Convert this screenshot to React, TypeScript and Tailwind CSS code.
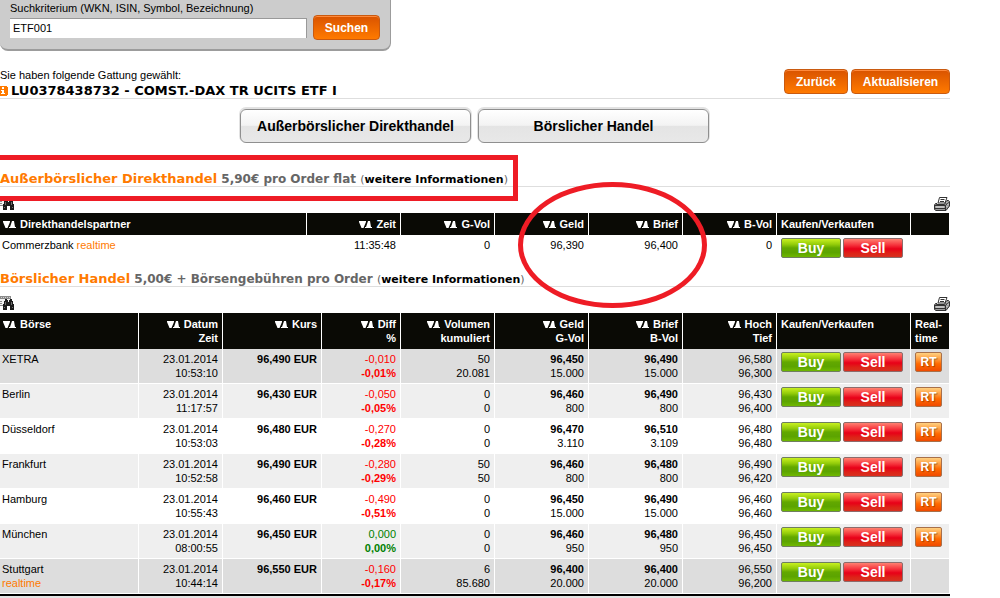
import type { ReactNode } from "react";

type Quote = {
  name: string;
  realtime?: boolean;
  date: string;
  time: string;
  price: string;
  diff: string;
  percent: string;
  trend: "up" | "down";
  volume: string;
  total: string;
  bid: string;
  bidVolume: string;
  ask: string;
  askVolume: string;
  high: string;
  low: string;
  rt: boolean;
  shade: string;
};

const quotes: Quote[] = [
  { name: "XETRA", date: "23.01.2014", time: "10:53:10", price: "96,490 EUR", diff: "-0,010", percent: "-0,01%", trend: "down", volume: "50", total: "20.081", bid: "96,450", bidVolume: "15.000", ask: "96,490", askVolume: "15.000", high: "96,580", low: "96,300", rt: true, shade: "bg-[#dddddd]" },
  { name: "Berlin", date: "23.01.2014", time: "11:17:57", price: "96,430 EUR", diff: "-0,050", percent: "-0,05%", trend: "down", volume: "0", total: "0", bid: "96,460", bidVolume: "800", ask: "96,490", askVolume: "800", high: "96,430", low: "96,400", rt: true, shade: "bg-[#efefef]" },
  { name: "Düsseldorf", date: "23.01.2014", time: "10:53:03", price: "96,480 EUR", diff: "-0,270", percent: "-0,28%", trend: "down", volume: "0", total: "0", bid: "96,470", bidVolume: "3.110", ask: "96,510", askVolume: "3.109", high: "96,480", low: "96,480", rt: true, shade: "bg-white" },
  { name: "Frankfurt", date: "23.01.2014", time: "10:52:58", price: "96,490 EUR", diff: "-0,280", percent: "-0,29%", trend: "down", volume: "50", total: "50", bid: "96,460", bidVolume: "800", ask: "96,480", askVolume: "800", high: "96,490", low: "96,420", rt: true, shade: "bg-[#efefef]" },
  { name: "Hamburg", date: "23.01.2014", time: "10:55:43", price: "96,460 EUR", diff: "-0,490", percent: "-0,51%", trend: "down", volume: "0", total: "0", bid: "96,450", bidVolume: "15.000", ask: "96,490", askVolume: "15.000", high: "96,460", low: "96,460", rt: true, shade: "bg-white" },
  { name: "München", date: "23.01.2014", time: "08:00:55", price: "96,450 EUR", diff: "0,000", percent: "0,00%", trend: "up", volume: "0", total: "0", bid: "96,460", bidVolume: "950", ask: "96,480", askVolume: "950", high: "96,450", low: "96,450", rt: true, shade: "bg-[#efefef]" },
  { name: "Stuttgart", realtime: true, date: "23.01.2014", time: "10:44:14", price: "96,550 EUR", diff: "-0,160", percent: "-0,17%", trend: "down", volume: "6", total: "85.680", bid: "96,400", bidVolume: "20.000", ask: "96,400", askVolume: "20.000", high: "96,550", low: "96,200", rt: false, shade: "bg-[#dddddd]" },
];

function OrangeButton({ children, size }: { children: string; size: string }) {
  return (
    <button
      type="button"
      className={`h-[25px] rounded border border-[#c95a10] bg-linear-to-b from-[#d95300] to-[#ff7a00] text-center font-bold text-white shadow-[inset_0_1px_0_#ff8a3c] ${size}`}
    >
      {children}
    </button>
  );
}

function NavButton({ children }: { children: string }) {
  return (
    <button
      type="button"
      className="h-[34px] w-[231px] rounded-md border border-[#8f8f8f] bg-[linear-gradient(#ffffff,#f3f3f3_48%,#e4e4e4_50%,#e8e8e8)] text-[14px] font-bold text-black shadow-[0_-1px_0_1px_#e2e2e2]"
    >
      {children}
    </button>
  );
}

function TradeButtons() {
  return (
    <div className="flex gap-0.5 text-[14px] leading-4 font-bold text-white [text-shadow:1px_1px_1px_#00000066]">
      <button
        type="button"
        className="h-5 w-[60px] rounded-xs border border-[#6f7f5f] bg-[linear-gradient(#c8f020,#93cc0a_30%,#62a800_50%,#5ca400_75%,#6fb800)]"
      >
        Buy
      </button>
      <button
        type="button"
        className="h-5 w-[60px] rounded-xs border border-[#8d6b6b] bg-[linear-gradient(#ff8070,#f5303a_35%,#e80018_55%,#dd2418_80%,#d83020)]"
      >
        Sell
      </button>
    </div>
  );
}

function RtButton() {
  return (
    <button
      type="button"
      className="block h-5 w-[27px] rounded-xs border border-[#a8704a] bg-[linear-gradient(#ffd080,#ff9a3c_35%,#ff6a00_60%,#f04a00)] text-[12px] leading-4 font-bold text-white [text-shadow:1px_1px_1px_#00000055]"
    >
      RT
    </button>
  );
}

function SortArrows() {
  return (
    <svg aria-hidden="true" viewBox="0 0 13 7" className="mr-1 inline-block h-[7px] w-[13px] align-baseline" fill="#fff">
      <path d="M0 0h7v1L4.500 7h-2L0 1z" />
      <path d="M6 7v-1h1l2-6h2l1 6h1v1z" />
    </svg>
  );
}

function FindIcon() {
  return (
    <svg viewBox="0 0 15 16" className="h-4 w-[15px]" shapeRendering="crispEdges">
      <path d="M0 1h11v10H0z" fill="#f2f2f2" />
      <path d="M0 1h11v3H0z" fill="#8a8a8a" />
      <path d="M1 2h1v1H1zM3 2h1v1H3zM5 2h1v1H5zM7 2h1v1H7zM9 2h1v1H9z" fill="#d0d0d0" />
      <path d="M10 3h1v4h-1zM0 6h2v1H0zM0 8h2v1H0zM0 10h3v1H0z" fill="#8a8a8a" />
      <path d="M5 4h2v1h1v2h1V5h1V4h2v2h1v3h1v6h-4v-4H7v4H3V9h1V6h1z" fill="#1c1c1c" />
      <path d="M5 7h1v3H5zM11 7h1v3h-1zM4 12h1v1H4zM12 12h1v1h-1z" fill="#6c6c6c" />
    </svg>
  );
}

function PrintIcon() {
  return (
    <svg viewBox="0 0 16 14" className="h-[14px] w-4">
      <path d="M1.500 6.500H3l-.5 1h8l1.500-3 1-1h1.500l1 1v4.500l-3.500 4.500h-10l-1.500-1V8z" fill="#9b9b9b" stroke="#333" />
      <path d="M5.500 .5h7.500l-2 5.500H4z" fill="#fff" stroke="#333" />
      <path d="M6.500 2.500h4M6 4.500h4" stroke="#333" />
      <path d="M1 8.500h10.500l3-3.500M1 11.500h10.500M11.500 8.500v5" stroke="#333" fill="none" />
      <path d="M2 10h8" stroke="#e6e6e6" />
      <path d="M12.500 5.500h1M13.500 7.500h1M12.500 9.500h1" stroke="#ddd" />
    </svg>
  );
}

function SectionHeading({ title, price }: { title: string; price: string }) {
  return (
    <h2 className="h-[15px] border-b border-[#dedede] font-['DejaVu_Sans',sans-serif] text-[12px] leading-[14px] font-bold text-[#666666]">
      <span className="text-[13px] text-[#ff7a00]">{title}</span> {price}{" "}
      <span className="text-[11px] font-normal">
        (
        <a href="#informationen" className="font-bold text-black">
          weitere Informationen
        </a>
        )
      </span>
    </h2>
  );
}

function Toolbar() {
  return (
    <div className="flex h-[26px] items-end justify-between pb-0.5">
      <button type="button" aria-label="Suchen">
        <FindIcon />
      </button>
      <button type="button" aria-label="Drucken">
        <PrintIcon />
      </button>
    </div>
  );
}

function Head({ children, left, plain }: { children?: ReactNode; left?: boolean; plain?: boolean }) {
  return (
    <th
      className={`border-r border-white py-1 pr-1 align-top ${plain ? "pl-1" : "pl-[3px]"} ${left ? "text-left" : "text-right"}`}
    >
      {!plain && <SortArrows />}
      {children}
    </th>
  );
}

function Cell({ children, className = "text-right" }: { children?: ReactNode; className?: string }) {
  return <td className={`border-r border-white py-[3px] pr-1 align-top ${className}`}>{children}</td>;
}

export default function App() {
  return (
    <div className="relative overflow-hidden bg-white font-['Liberation_Sans',Arial,sans-serif] text-[11px] leading-[14px] text-black">
      <div className="w-[95%]">
        <form className="w-fit rounded-b-lg border-r border-b-2 border-[#9c9c9c] bg-[#cccccc] pt-px pr-2.5 pb-[9px] pl-2.5">
          <label htmlFor="suche" className="block">
            Suchkriterium (WKN, ISIN, Symbol, Bezeichnung)
          </label>
          <div className="flex items-center gap-1.5">
            <input
              id="suche"
              type="text"
              defaultValue="ETF001"
              className="h-5 w-[297px] border-t border-r border-[#999999] bg-white px-[3px] text-[11px]"
            />
            <OrangeButton size="w-[67px] text-[12px]">Suchen</OrangeButton>
          </div>
        </form>

        <div className="mt-[17px] flex items-start justify-between border-b border-[#dedede]">
          <div>
            <p>Sie haben folgende Gattung gewählt:</p>
            <h1 className="mt-0.5 flex items-center gap-[3px] font-['DejaVu_Sans',sans-serif] text-[13px] leading-[14px] font-bold">
              <svg aria-hidden="true" viewBox="0 0 8 10" className="h-2.5 w-2" shapeRendering="crispEdges">
                <path d="M0 0h7v1h1v8H7v1H0z" fill="#ff7a00" />
                <path d="M2 1h2v2H2zM1 4h3v3h1v1H1V7h1V5H1z" fill="#fff" />
              </svg>
              LU0378438732 - COMST.-DAX TR UCITS ETF I
            </h1>
          </div>
          <div className="flex gap-[3px] pt-px">
            <OrangeButton size="w-16 text-[12px]">Zurück</OrangeButton>
            <OrangeButton size="w-[99px] text-[12px]">Aktualisieren</OrangeButton>
          </div>
        </div>

        <nav className="mt-2.5 mb-[29px] flex justify-center gap-[7px] pr-px">
          <NavButton>Außerbörslicher Direkthandel</NavButton>
          <NavButton>Börslicher Handel</NavButton>
        </nav>

        <section className="mb-0.5">
          <SectionHeading title="Außerbörslicher Direkthandel" price="5,90€ pro Order flat" />
          <Toolbar />
          <table className="w-full table-fixed border-separate border-spacing-0">
            <colgroup>
              <col />
              <col className="w-[94px]" />
              <col className="w-[94px]" />
              <col className="w-[94px]" />
              <col className="w-[94px]" />
              <col className="w-[94px]" />
              <col className="w-[134px]" />
              <col className="w-[39px]" />
            </colgroup>
            <thead className="bg-[#0a0a05] text-white">
              <tr>
                <Head left>Direkthandelspartner</Head>
                <Head>Zeit</Head>
                <Head>G-Vol</Head>
                <Head>Geld</Head>
                <Head>Brief</Head>
                <Head>B-Vol</Head>
                <Head left plain>Kaufen/Verkaufen</Head>
                <Head plain />
              </tr>
            </thead>
            <tbody>
              <tr className="h-[35px]">
                <Cell className="pl-0.5">
                  Commerzbank <span className="text-[#ff7a00]">realtime</span>
                </Cell>
                <Cell>11:35:48</Cell>
                <Cell>0</Cell>
                <Cell>96,390</Cell>
                <Cell>96,400</Cell>
                <Cell>0</Cell>
                <Cell className="pl-1">
                  <TradeButtons />
                </Cell>
                <Cell />
              </tr>
            </tbody>
          </table>
        </section>

        <section>
          <SectionHeading title="Börslicher Handel" price="5,00€ + Börsengebühren pro Order" />
          <Toolbar />
          <table className="w-full table-fixed border-separate border-spacing-0">
            <colgroup>
              <col />
              <col className="w-[84px]" />
              <col className="w-[99px]" />
              <col className="w-[79px]" />
              <col className="w-[94px]" />
              <col className="w-[94px]" />
              <col className="w-[94px]" />
              <col className="w-[94px]" />
              <col className="w-[134px]" />
              <col className="w-[39px]" />
            </colgroup>
            <thead className="bg-[#0a0a05] text-white">
              <tr>
                <Head left>Börse</Head>
                <Head>Datum<br />Zeit</Head>
                <Head>Kurs</Head>
                <Head>Diff<br />%</Head>
                <Head>Volumen<br />kumuliert</Head>
                <Head>Geld<br />G-Vol</Head>
                <Head>Brief<br />B-Vol</Head>
                <Head>Hoch<br />Tief</Head>
                <Head left plain>Kaufen/Verkaufen</Head>
                <Head left plain>Real-<br />time</Head>
              </tr>
            </thead>
            <tbody className="[&_td]:border-b">
              {quotes.map((q) => (
                <tr key={q.name} className={`h-[35px] ${q.shade}`}>
                  <Cell className="pl-0.5">
                    {q.name}
                    {q.realtime && <div className="text-[#ff7a00]">realtime</div>}
                  </Cell>
                  <Cell>{q.date}<br />{q.time}</Cell>
                  <Cell><b>{q.price}</b></Cell>
                  <Cell className={q.trend === "down" ? "text-right text-[#ff0000]" : "text-right text-[#008000]"}>
                    {q.diff}<br /><b>{q.percent}</b>
                  </Cell>
                  <Cell>{q.volume}<br />{q.total}</Cell>
                  <Cell><b>{q.bid}</b><br />{q.bidVolume}</Cell>
                  <Cell><b>{q.ask}</b><br />{q.askVolume}</Cell>
                  <Cell>{q.high}<br />{q.low}</Cell>
                  <Cell className="pl-1"><TradeButtons /></Cell>
                  <Cell className="pl-1">{q.rt && <RtButton />}</Cell>
                </tr>
              ))}
            </tbody>
          </table>
          <div className="h-1 border-t-2 border-black bg-[#e4e4e4]" />
        </section>
      </div>

      <div className="pointer-events-none absolute top-[155px] left-0 h-[46px] w-[518px] border-y-[5px] border-r-[5px] border-[#ee1c25]" />
      <div className="pointer-events-none absolute top-[182px] left-[518px] h-[126px] w-[189px] rounded-[50%] border-[5px] border-[#ee1c25]" />
    </div>
  );
}
